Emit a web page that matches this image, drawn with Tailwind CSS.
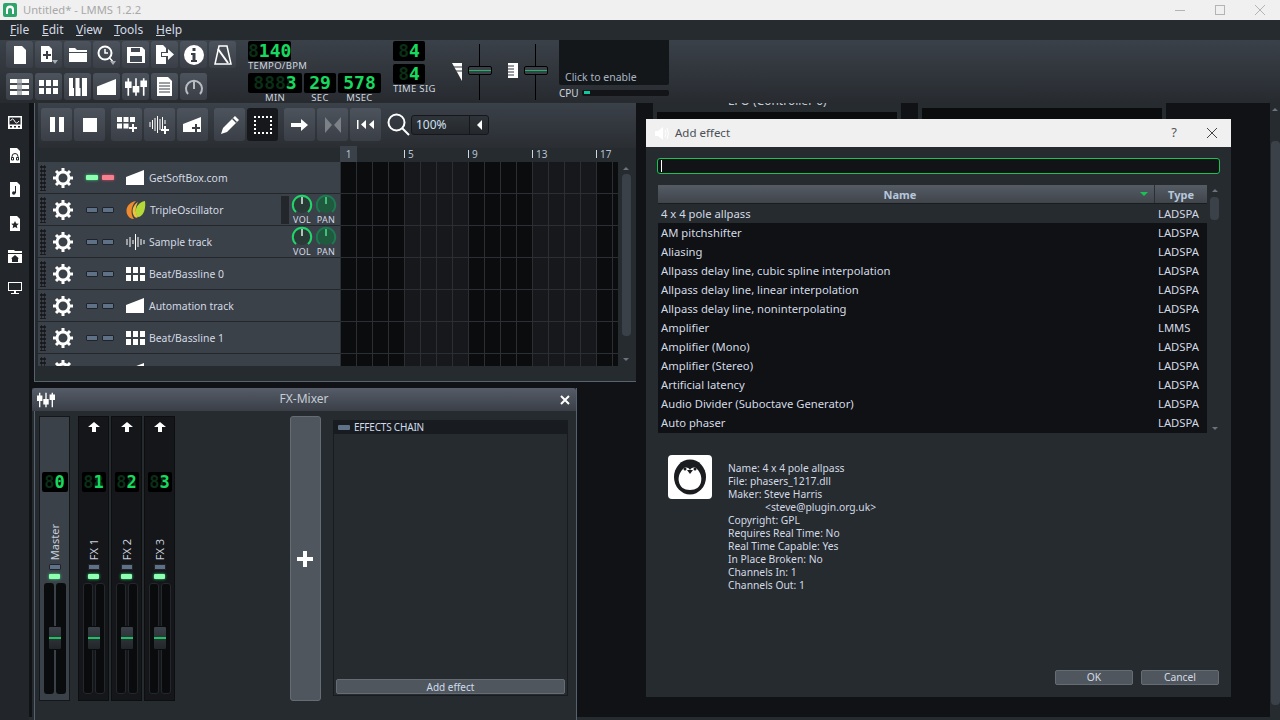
<!DOCTYPE html>
<html lang="en">
<head>
  <meta charset="UTF-8">
  <title>Untitled* - LMMS 1.2.2</title>
  <script src="https://cdn.jsdelivr.net/npm/@tailwindcss/browser@4"></script>
</head>
<body class="w-[1280px] h-[720px] overflow-hidden bg-[#101215] text-[#d3dae4] [font-family:'Noto_Sans',sans-serif] text-[10.400px]">

  <!-- shared icons -->
  <svg class="hidden">
    <symbol id="gear" viewBox="0 0 20 20"><circle cx="10" cy="10" r="6" fill="none" stroke="#fff" stroke-width="3"/><g stroke="#fff" stroke-width="3"><path d="M10 0v4M10 16v4M0 10h4M16 10h4M3 3l3 3M14 14l3 3M17 3l-3 3M6 14l-3 3"/></g></symbol>
    <symbol id="wedge" viewBox="0 0 18 15"><path d="M0 15V7L18 0v15z" fill="#fff"/></symbol>
    <symbol id="beat" viewBox="0 0 19 14"><path d="M0 0h5v6H0zM7 0h5v6H7zM14 0h5v6h-5zM0 8h5v6H0zM7 8h5v6H7zM14 8h5v6h-5z" fill="#fff"/></symbol>
    <symbol id="wave" viewBox="0 0 19 16"><path d="M1 5v6M4 3v10M7 6v4M9.500 0v16M12 3v10M15 5v6M18 6v4" stroke="#fff" stroke-width="1" fill="none"/></symbol>
    <symbol id="mixer" viewBox="0 0 20 16"><g stroke="#fff" stroke-width="1.500"><path d="M3 0v16M10 0v16M17 0v16"/></g><path d="M0 3h6v6H0zM7 7h6v6H7zM14 2h6v6h-6z" fill="#fff"/></symbol>
    <symbol id="knob-vol" viewBox="0 0 22 22"><circle cx="11" cy="11" r="8" fill="#2a3a37"/><path d="M5 18A9.200 9.200 0 1 1 17 18" fill="none" stroke="#1fd66a" stroke-width="2"/><path d="M11 3v7" stroke="#d9f5e3" stroke-width="1.500"/></symbol>
    <symbol id="knob-pan" viewBox="0 0 22 22"><circle cx="11" cy="11" r="8" fill="#1f5a3e"/><path d="M5 18A9.200 9.200 0 1 1 17 18" fill="none" stroke="#1c7a50" stroke-width="2"/><path d="M11 3v7" stroke="#4fe08e" stroke-width="1.500"/></symbol>
    <symbol id="send" viewBox="0 0 12 10"><path d="M6 0l6 5H8v5H4V5H0z" fill="#fff"/></symbol>
  </svg>

  <!-- window title -->
  <div class="h-5 bg-[#f0f0f0] flex items-center pl-[3px] gap-[6px] text-[11.200px] text-[#a8a8a8]">
    <svg class="w-[14px] h-[14px]" viewBox="0 0 14 14"><rect width="14" height="14" rx="2" fill="#2ea36a"/><path d="M3 11V6.500a4 4 0 0 1 8 0V11H9V7a2 2 0 0 0-4 0v4z" fill="#fff"/></svg>
    <span>Untitled* - LMMS 1.2.2</span>
    <div class="ml-auto flex items-center gap-[30px] pr-[15px]">
      <div class="w-[10px] h-px bg-[#b4b4b4]"></div>
      <div class="w-[10px] h-[10px] border border-[#b4b4b4]"></div>
      <svg class="w-[10px] h-[10px]" viewBox="0 0 10 10"><path d="M0 0l10 10M10 0L0 10" stroke="#b4b4b4"/></svg>
    </div>
  </div>

  <!-- menu -->
  <div class="h-5 bg-[#262b30] flex items-center text-[12px] text-[#d3dae4] pl-[10px]">
    <span class="w-[32px]"><u>F</u>ile</span>
    <span class="w-[34px]"><u>E</u>dit</span>
    <span class="w-[38px]"><u>V</u>iew</span>
    <span class="w-[42px]"><u>T</u>ools</span>
    <span><u>H</u>elp</span>
  </div>

  <!-- main toolbar -->
  <div class="h-[63px] bg-gradient-to-b from-[#3b4149] to-[#272b30] flex">
    <div class="w-[248px] shrink-0 pl-[6px] pt-px flex flex-col gap-[5px]">
      <div class="flex gap-[2px]">
        <div class="w-[27px] h-[27px] rounded-[3px] bg-gradient-to-b from-[#4d535c] to-[#3a3f47] flex items-center justify-center"><svg class="w-[18px] h-[18px]" viewBox="0 0 18 18"><path d="M3 0h8l4 4v14H3z" fill="#fff"/></svg></div>
        <div class="w-[27px] h-[27px] rounded-[3px] bg-gradient-to-b from-[#4d535c] to-[#3a3f47] flex items-center justify-center"><svg class="w-[20px] h-[20px]" viewBox="0 0 20 20"><path d="M2 1h8l3 3v13H2z" fill="#fff"/><path d="M7 6v3H4v2h3v3h2v-3h3V9H9V6z" fill="#3a3f47"/><path d="M13 15h6l-3 4z" fill="#a8adb3"/></svg></div>
        <div class="w-[27px] h-[27px] rounded-[3px] bg-gradient-to-b from-[#4d535c] to-[#3a3f47] flex items-center justify-center"><svg class="w-[18px] h-[16px]" viewBox="0 0 18 16"><path d="M0 1h6l2 2h10v2H0zM0 6h18v9H0z" fill="#fff"/></svg></div>
        <div class="w-[27px] h-[27px] rounded-[3px] bg-gradient-to-b from-[#4d535c] to-[#3a3f47] flex items-center justify-center"><svg class="w-[21px] h-[21px]" viewBox="0 0 21 21"><circle cx="9" cy="9" r="6.500" fill="none" stroke="#fff" stroke-width="2"/><path d="M9 5v4h3M13.500 14l3 3" fill="none" stroke="#fff" stroke-width="1.500"/><path d="M14 17h6l-3 4z" fill="#a8adb3"/></svg></div>
        <div class="w-[27px] h-[27px] rounded-[3px] bg-gradient-to-b from-[#4d535c] to-[#3a3f47] flex items-center justify-center"><svg class="w-[18px] h-[18px]" viewBox="0 0 18 18"><path d="M0 1h15l3 3v13H0z" fill="#fff"/><path d="M4 2h9v4H4zM3 10h12v6H3z" fill="#444a52"/></svg></div>
        <div class="w-[27px] h-[27px] rounded-[3px] bg-gradient-to-b from-[#4d535c] to-[#3a3f47] flex items-center justify-center"><svg class="w-[20px] h-[19px]" viewBox="0 0 20 19"><path d="M1 0h7l3 3v4H6v5h5v7H1z" fill="#fff"/><path d="M7 8h6V4l6 5.500-6 5.500v-4H7z" fill="#fff"/></svg></div>
        <div class="w-[27px] h-[27px] rounded-[3px] bg-gradient-to-b from-[#4d535c] to-[#3a3f47] flex items-center justify-center"><svg class="w-[20px] h-[20px]" viewBox="0 0 20 20"><circle cx="10" cy="10" r="10" fill="#fff"/><path d="M8.500 3h3v3h-3zM7 8h4.500v7H13v2H7v-2h1.500v-5H7z" fill="#3a3f47"/></svg></div>
        <div class="w-[27px] h-[27px] rounded-[3px] bg-gradient-to-b from-[#4d535c] to-[#3a3f47] flex items-center justify-center"><svg class="w-[20px] h-[20px]" viewBox="0 0 20 20"><path d="M6 1h8l4 18H2z" fill="none" stroke="#fff" stroke-width="1.500"/><path d="M5 4l10 14" stroke="#fff" stroke-width="2"/></svg></div>
      </div>
      <div class="flex gap-[2px]">
        <div class="w-[27px] h-[27px] rounded-[3px] bg-gradient-to-b from-[#4d535c] to-[#3a3f47] flex items-center justify-center"><svg class="w-[19px] h-[16px]" viewBox="0 0 19 16"><path d="M0 0h19v4H0zM0 6h19v4H0zM0 12h19v4H0z" fill="#fff"/><path d="M7 0h5v16H7z" fill="#8f949a" opacity=".7"/></svg></div>
        <div class="w-[27px] h-[27px] rounded-[3px] bg-gradient-to-b from-[#4d535c] to-[#3a3f47] flex items-center justify-center"><svg class="w-[19px] h-[14px]"><use href="#beat"/></svg></div>
        <div class="w-[27px] h-[27px] rounded-[3px] bg-gradient-to-b from-[#4d535c] to-[#3a3f47] flex items-center justify-center"><svg class="w-[18px] h-[18px]" viewBox="0 0 18 18"><path d="M0 0h5v18H0zM6.500 0h5v18h-5zM13 0h5v18h-5z" fill="#fff"/><path d="M4 0h1.500v10H4zM10.500 0H12v10h-1.500z" fill="#3a3f47"/></svg></div>
        <div class="w-[27px] h-[27px] rounded-[3px] bg-gradient-to-b from-[#4d535c] to-[#3a3f47] flex items-center justify-center"><svg class="w-[19px] h-[16px]"><use href="#wedge"/></svg></div>
        <div class="w-[27px] h-[27px] rounded-[3px] bg-gradient-to-b from-[#4d535c] to-[#3a3f47] flex items-center justify-center"><svg class="w-[22px] h-[18px]"><use href="#mixer"/></svg></div>
        <div class="w-[27px] h-[27px] rounded-[3px] bg-gradient-to-b from-[#4d535c] to-[#3a3f47] flex items-center justify-center"><svg class="w-[17px] h-[19px]" viewBox="0 0 17 19"><path d="M1 0h11l4 4v15H1z" fill="#fff"/><path d="M3 6h11M3 9h11M3 12h11M3 15h11" stroke="#3a3f47"/></svg></div>
        <div class="w-[27px] h-[27px] rounded-[3px] bg-gradient-to-b from-[#4d535c] to-[#3a3f47] flex items-center justify-center"><svg class="w-[20px] h-[20px]" viewBox="0 0 20 20"><path d="M4 17A8 8 0 1 1 16 17" fill="none" stroke="#b9bdc2" stroke-width="2"/><path d="M10 4v8" stroke="#b9bdc2" stroke-width="2"/></svg></div>
      </div>
    </div>

    <!-- lcd group -->
    <div class="w-[145px] shrink-0 pt-px">
      <div class="w-[43px] h-[20px] bg-black rounded-[2px] grid place-items-center font-['DejaVu_Sans_Mono'] font-bold text-[18px] leading-none">
        <span class="[grid-area:1/1] text-[#0b2e16]">8140</span>
        <span class="[grid-area:1/1] text-[#18d860] whitespace-pre"> 140</span>
      </div>
      <div class="mt-[-1px] text-[9.500px] leading-[12px] tracking-[0.3px] text-[#cfd6df]">TEMPO/BPM</div>
      <div class="flex mt-[1px] gap-[2px]">
        <div class="flex flex-col items-center">
          <div class="w-[54px] h-[20px] bg-black rounded-[2px] grid place-items-center font-['DejaVu_Sans_Mono'] font-bold text-[18px] leading-none">
            <span class="[grid-area:1/1] text-[#0b2e16]">8888</span>
            <span class="[grid-area:1/1] text-[#18d860] whitespace-pre">   3</span>
          </div>
          <div class="-mt-px text-[9.500px] leading-[12px] tracking-[0.3px] text-[#cfd6df]">MIN</div>
        </div>
        <div class="flex flex-col items-center">
          <div class="w-[32px] h-[20px] bg-black rounded-[2px] grid place-items-center font-['DejaVu_Sans_Mono'] font-bold text-[18px] leading-none text-[#18d860]">29</div>
          <div class="-mt-px text-[9.500px] leading-[12px] tracking-[0.3px] text-[#cfd6df]">SEC</div>
        </div>
        <div class="flex flex-col items-center">
          <div class="w-[43px] h-[20px] bg-black rounded-[2px] grid place-items-center font-['DejaVu_Sans_Mono'] font-bold text-[18px] leading-none text-[#18d860]">578</div>
          <div class="-mt-px text-[9.500px] leading-[12px] tracking-[0.3px] text-[#cfd6df]">MSEC</div>
        </div>
      </div>
    </div>

    <!-- time signature -->
    <div class="w-[59px] shrink-0 pt-px flex flex-col gap-[3px]">
      <div class="w-[32px] h-[20px] bg-black rounded-[2px] grid place-items-center font-['DejaVu_Sans_Mono'] font-bold text-[18px] leading-none">
        <span class="[grid-area:1/1] text-[#0b2e16]">84</span><span class="[grid-area:1/1] text-[#18d860] whitespace-pre"> 4</span>
      </div>
      <div class="w-[32px] h-[20px] bg-black rounded-[2px] grid place-items-center font-['DejaVu_Sans_Mono'] font-bold text-[18px] leading-none">
        <span class="[grid-area:1/1] text-[#0b2e16]">84</span><span class="[grid-area:1/1] text-[#18d860] whitespace-pre"> 4</span>
      </div>
      <div class="-mt-[3px] text-[9.500px] leading-[10px] tracking-[0.3px] text-[#cfd6df] whitespace-nowrap">TIME SIG</div>
    </div>

    <!-- master sliders -->
    <div class="w-[107px] shrink-0 relative">
      <svg class="absolute left-0 top-[23px] w-[10px] h-[18px]" viewBox="0 0 10 18"><path d="M0 0h10v18z" fill="#fff"/><path d="M0 4h10M0 8h10" stroke="#353a41"/></svg>
      <div class="absolute left-[27px] top-[4px] w-px h-[56px] bg-black"></div>
      <div class="absolute left-[16px] top-[26px] w-[24px] h-[9px] rounded-[2px] border border-black bg-[#3b4149] flex items-center"><div class="w-full h-px bg-[#1fb765]"></div></div>
      <svg class="absolute left-[56px] top-[23px] w-[10px] h-[15px]" viewBox="0 0 10 15"><path d="M0 0h10v15H0z" fill="#fff"/><path d="M0 3h6M0 6h6M0 9h6M0 12h6" stroke="#32373d"/></svg>
      <div class="absolute left-[83px] top-[4px] w-px h-[56px] bg-black"></div>
      <div class="absolute left-[72px] top-[26px] w-[24px] h-[9px] rounded-[2px] border border-black bg-[#3b4149] flex items-center"><div class="w-full h-px bg-[#1fb765]"></div></div>
    </div>

    <!-- cpu graph -->
    <div class="w-[110px] shrink-0">
      <div class="h-[45px] bg-[#14171a] rounded-b-[2px] pl-[6px] pt-[30px] text-[10.500px] leading-[14px] text-[#aab5c4]">Click to enable</div>
      <div class="flex items-center mt-[2px] text-[10px] leading-[12px] text-[#cfd6df]">CPU
        <div class="ml-[3px] w-[87px] h-[6px] rounded-[2px] bg-[#121417] pl-[2px] pt-[1px]"><div class="w-[6px] h-[3px] bg-[#10c8a0]"></div></div>
      </div>
    </div>
  </div>

  <div class="flex h-[617px]">
    <!-- side bar -->
    <div class="w-[29px] shrink-0 bg-[#22262a] flex flex-col items-center pt-[13px] gap-[19px]">
      <svg class="w-[14px] h-[13px]" viewBox="0 0 14 13"><path d="M0 0h14v13H0z" fill="#fff"/><path d="M1.500 1.500h11v7h-11zM2 10h2v1.500H2zM6 10h2v1.500H6zM10 10h2v1.500h-2z" fill="#22262a"/><path d="M2.500 5q2-4 4 0t4.500 0" fill="none" stroke="#fff"/></svg>
      <svg class="w-[10px] h-[15px]" viewBox="0 0 10 15"><path d="M0 0h7l3 3v12H0z" fill="#fff"/><path d="M2 10V8.500a3 3 0 0 1 6 0V10M1.500 9.500h2V12h-2zM6.500 9.500h2V12h-2z" fill="none" stroke="#22262a"/></svg>
      <svg class="w-[10px] h-[15px]" viewBox="0 0 10 15"><path d="M0 0h7l3 3v12H0z" fill="#fff"/><path d="M5.500 4v7" stroke="#22262a"/><circle cx="3.800" cy="11" r="1.800" fill="#22262a"/></svg>
      <svg class="w-[10px] h-[15px]" viewBox="0 0 10 15"><path d="M0 0h7l3 3v12H0z" fill="#fff"/><path d="M5 5l1.200 2.500 2.600.3-2 1.800.6 2.700L5 11l-2.400 1.300.6-2.700-2-1.800 2.600-.3z" fill="#22262a"/></svg>
      <svg class="w-[14px] h-[13px]" viewBox="0 0 14 13"><path d="M0 0h6l1 1h7v2H0zM0 4h14v9H0z" fill="#fff"/><path d="M7 5l4 3.500h-1V12H4V8.500H3z" fill="#22262a"/></svg>
      <svg class="w-[14px] h-[12px]" viewBox="0 0 14 12"><path d="M0 0h14v9H0zM6 9h2v2h3v1H3v-1h3z" fill="#fff"/><path d="M1 1h12v7H1z" fill="#22262a"/></svg>
    </div>

    <!-- workspace -->
    <div class="relative flex-1 bg-[#101215] overflow-hidden">

      <!-- background windows -->
      <div class="absolute left-[624px] top-0 w-[248px] h-[100px] bg-[#262b30] px-[4px] pt-[9px] overflow-hidden">
        <div class="absolute left-[75px] top-[-11px] text-[12px] leading-[18px] text-[#c5ccd6] whitespace-nowrap">LFO (Controller 0)</div>
        <div class="h-full bg-[#0b0c0e]"></div>
      </div>
      <div class="absolute left-[889px] top-0 w-[248px] h-[100px] bg-[#262b30] px-[4px] pt-[5px]"><div class="h-full bg-[#0b0c0e]"></div></div>

      <!-- right scroll bar -->
      <div class="absolute right-0 top-0 w-[10px] h-[614px] bg-[#262b30] flex flex-col items-center pt-[5px]">
        <div class="w-0 h-0 border-x-[3px] border-x-transparent border-b-[3px] border-b-[#6c737c]"></div>
        <div class="mt-[30px] w-[9px] h-[564px] rounded-[4px] bg-[#3b4149]"></div>
      </div>
      <div class="absolute left-0 right-0 bottom-0 h-[3px] bg-[#262b30]"></div>

      <!-- song editor -->
      <div class="absolute left-[5px] top-0 w-[602px] h-[279px] bg-[#262b30] border-l border-b border-[#56626e] flex flex-col">
        <div class="h-[45px] shrink-0 ml-[3px] bg-gradient-to-b from-[#3b4149] to-[#2a2e33] flex items-center pl-[3px] pb-[2px]">
          <div class="flex gap-[2px]">
            <div class="w-[31px] h-[33px] rounded-[3px] bg-gradient-to-b from-[#4d535c] to-[#3a3f47] flex items-center justify-center"><svg class="w-[14px] h-[15px]" viewBox="0 0 14 15"><path d="M0 0h5v15H0zM9 0h5v15H9z" fill="#fff"/></svg></div>
            <div class="w-[31px] h-[33px] rounded-[3px] bg-gradient-to-b from-[#4d535c] to-[#3a3f47] flex items-center justify-center"><div class="w-[14px] h-[14px] bg-white"></div></div>
          </div>
          <div class="flex gap-[2px] ml-[6px]">
            <div class="w-[31px] h-[33px] rounded-[3px] bg-gradient-to-b from-[#4d535c] to-[#3a3f47] flex items-center justify-center"><svg class="w-[20px] h-[15px]" viewBox="0 0 20 15"><path d="M0 0h5v5H0zM6.500 0h5v5h-5zM13 0h5v5h-5zM0 6.500h5v5H0zM6.500 6.500h5v5h-5z" fill="#fff"/><path d="M15 7v3h-3v2h3v3h2v-3h3v-2h-3V7z" fill="#fff"/></svg></div>
            <div class="w-[31px] h-[33px] rounded-[3px] bg-gradient-to-b from-[#4d535c] to-[#3a3f47] flex items-center justify-center"><svg class="w-[21px] h-[18px]" viewBox="0 0 21 18"><path d="M1 6v5M3.500 4v9M6 2v13M8.500 0v17M11 3v11M13.500 1v12M16 4v4" stroke="#fff" fill="none"/><path d="M15 10v3h-3v2h3v3h2v-3h3v-2h-3v-3z" fill="#fff"/></svg></div>
            <div class="w-[31px] h-[33px] rounded-[3px] bg-gradient-to-b from-[#4d535c] to-[#3a3f47] flex items-center justify-center"><svg class="w-[19px] h-[15px]" viewBox="0 0 19 15"><path d="M0 15V7L18 0v15z" fill="#fff"/><path d="M12 7v3H9v2h3v3h2v-3h3v-2h-3V7z" fill="#3a3f47"/></svg></div>
          </div>
          <div class="flex gap-[2px] ml-[6px]">
            <div class="w-[31px] h-[33px] rounded-[3px] bg-gradient-to-b from-[#4d535c] to-[#3a3f47] flex items-center justify-center"><svg class="w-[20px] h-[20px]" viewBox="0 0 20 20"><path d="M15 1l4 4L7 17l-6 2 2-6z" fill="#fff"/><path d="M12.500 3.500l4 4" stroke="#3f454d" stroke-width="1.500"/></svg></div>
            <div class="w-[31px] h-[33px] rounded-[3px] bg-[#16181c] flex items-center justify-center"><div class="w-[18px] h-[18px] border-[2px] border-dotted border-white"></div></div>
          </div>
          <div class="flex gap-[2px] ml-[6px]">
            <div class="w-[31px] h-[33px] rounded-[3px] bg-gradient-to-b from-[#4d535c] to-[#3a3f47] flex items-center justify-center"><svg class="w-[17px] h-[12px]" viewBox="0 0 17 12"><path d="M0 4h10V0l7 6-7 6V8H0z" fill="#fff"/></svg></div>
            <div class="w-[31px] h-[33px] rounded-[3px] bg-gradient-to-b from-[#4d535c] to-[#3a3f47] flex items-center justify-center"><svg class="w-[16px] h-[16px]" viewBox="0 0 16 16"><path d="M0 0l7 8-7 8zM16 0L9 8l7 8z" fill="#7c8187"/></svg></div>
            <div class="w-[31px] h-[33px] rounded-[3px] bg-gradient-to-b from-[#4d535c] to-[#3a3f47] flex items-center justify-center"><svg class="w-[17px] h-[9px]" viewBox="0 0 17 9"><path d="M0 0h1.500v9H0zM9 0v9L4 4.500zM17 0v9l-5-4.500z" fill="#fff"/></svg></div>
          </div>
          <svg class="ml-[6px] w-[23px] h-[23px]" viewBox="0 0 23 23"><circle cx="9.500" cy="9.500" r="8" fill="none" stroke="#fff" stroke-width="2"/><path d="M15 15l7 7" stroke="#fff" stroke-width="2"/></svg>
          <div class="ml-px w-[78px] h-[20px] rounded-[3px] border border-[#15171a] bg-gradient-to-b from-[#2f343a] to-[#24282c] flex items-center pl-[4px] text-[12px] text-[#cfe0f2]">100%
            <div class="ml-auto w-[19px] h-full border-l border-[#15171a] flex items-center justify-center"><div class="w-0 h-0 border-y-[5px] border-y-transparent border-r-[5px] border-r-white"></div></div>
          </div>
        </div>

        <div class="ml-[3px] flex flex-1 min-h-0">
          <div class="w-[302px] shrink-0 flex flex-col">
            <div class="h-[14px] shrink-0"></div>
            <div class="h-[204px] overflow-hidden flex flex-col">

              <div class="h-[32px] shrink-0 bg-[#3b4149] border-b border-[#23272b] flex items-center relative">
                <div class="ml-[2px] w-[6px] h-[26px] bg-[radial-gradient(#16181b_1px,transparent_1.500px)] bg-[length:3px_4px]"></div>
                <svg class="ml-[7px] w-[20px] h-[20px]"><use href="#gear"/></svg>
                <div class="ml-[13px] w-[12px] h-[5px] rounded-[1px] bg-[#8dffb0] shadow-[0_0_3px_#35e07a]"></div>
                <div class="ml-[4px] w-[12px] h-[5px] rounded-[1px] bg-[#f5808f] shadow-[0_0_3px_#e04a5e]"></div>
                <svg class="ml-[12px] w-[18px] h-[15px]"><use href="#wedge"/></svg>
                <span class="ml-[5px] pt-[2px]">GetSoftBox.com</span>
              </div>

              <div class="h-[32px] shrink-0 bg-[#3b4149] border-b border-[#23272b] flex items-center relative">
                <div class="ml-[2px] w-[6px] h-[26px] bg-[radial-gradient(#16181b_1px,transparent_1.500px)] bg-[length:3px_4px]"></div>
                <svg class="ml-[7px] w-[20px] h-[20px]"><use href="#gear"/></svg>
                <div class="ml-[13px] w-[12px] h-[6px] rounded-[1px] border border-[#20242a] bg-[#5e7187]"></div>
                <div class="ml-[4px] w-[12px] h-[6px] rounded-[1px] border border-[#20242a] bg-[#5e7187]"></div>
                <svg class="ml-[12px] w-[20px] h-[20px]" viewBox="0 0 20 20"><path d="M10 1C3 2-1 8 1 14c1 3 4 5 7 5C4 14 5 6 10 1z" fill="#ef8a2e"/><path d="M12 2C7 5 5 11 8 16c1 2 3 2 4 1-3-4-3-10 0-15z" fill="#f0c23c"/><path d="M19 1c-6 1-10 6-9 12 0 2 1 4 3 4 5-2 7-9 6-16z" fill="#b5d936"/></svg>
                <span class="ml-[4px] pt-[2px]">TripleOscillator</span>
                <div class="absolute left-[243px] top-[2px] w-[8px] h-[28px] bg-[#23272b]"></div>
                <div class="absolute left-[252px] top-0 w-[24px] flex flex-col items-center">
                  <svg class="w-[22px] h-[22px]"><use href="#knob-vol"/></svg>
                  <span class="-mt-px text-[9px] leading-[9px] tracking-[0.3px]">VOL</span>
                </div>
                <div class="absolute left-[276px] top-0 w-[24px] flex flex-col items-center">
                  <svg class="w-[22px] h-[22px]"><use href="#knob-pan"/></svg>
                  <span class="-mt-px text-[9px] leading-[9px] tracking-[0.3px]">PAN</span>
                </div>
              </div>

              <div class="h-[32px] shrink-0 bg-[#3b4149] border-b border-[#23272b] flex items-center relative">
                <div class="ml-[2px] w-[6px] h-[26px] bg-[radial-gradient(#16181b_1px,transparent_1.500px)] bg-[length:3px_4px]"></div>
                <svg class="ml-[7px] w-[20px] h-[20px]"><use href="#gear"/></svg>
                <div class="ml-[13px] w-[12px] h-[6px] rounded-[1px] border border-[#20242a] bg-[#5e7187]"></div>
                <div class="ml-[4px] w-[12px] h-[6px] rounded-[1px] border border-[#20242a] bg-[#5e7187]"></div>
                <svg class="ml-[12px] w-[19px] h-[16px]"><use href="#wave"/></svg>
                <span class="ml-[4px] pt-[2px]">Sample track</span>
                <div class="absolute left-[252px] top-0 w-[24px] flex flex-col items-center">
                  <svg class="w-[22px] h-[22px]"><use href="#knob-vol"/></svg>
                  <span class="-mt-px text-[9px] leading-[9px] tracking-[0.3px]">VOL</span>
                </div>
                <div class="absolute left-[276px] top-0 w-[24px] flex flex-col items-center">
                  <svg class="w-[22px] h-[22px]"><use href="#knob-pan"/></svg>
                  <span class="-mt-px text-[9px] leading-[9px] tracking-[0.3px]">PAN</span>
                </div>
              </div>

              <div class="h-[32px] shrink-0 bg-[#3b4149] border-b border-[#23272b] flex items-center">
                <div class="ml-[2px] w-[6px] h-[26px] bg-[radial-gradient(#16181b_1px,transparent_1.500px)] bg-[length:3px_4px]"></div>
                <svg class="ml-[7px] w-[20px] h-[20px]"><use href="#gear"/></svg>
                <div class="ml-[13px] w-[12px] h-[6px] rounded-[1px] border border-[#20242a] bg-[#5e7187]"></div>
                <div class="ml-[4px] w-[12px] h-[6px] rounded-[1px] border border-[#20242a] bg-[#5e7187]"></div>
                <svg class="ml-[12px] w-[19px] h-[14px]"><use href="#beat"/></svg>
                <span class="ml-[4px] pt-[2px]">Beat/Bassline 0</span>
              </div>

              <div class="h-[32px] shrink-0 bg-[#3b4149] border-b border-[#23272b] flex items-center">
                <div class="ml-[2px] w-[6px] h-[26px] bg-[radial-gradient(#16181b_1px,transparent_1.500px)] bg-[length:3px_4px]"></div>
                <svg class="ml-[7px] w-[20px] h-[20px]"><use href="#gear"/></svg>
                <div class="ml-[13px] w-[12px] h-[6px] rounded-[1px] border border-[#20242a] bg-[#5e7187]"></div>
                <div class="ml-[4px] w-[12px] h-[6px] rounded-[1px] border border-[#20242a] bg-[#5e7187]"></div>
                <svg class="ml-[12px] w-[18px] h-[15px]"><use href="#wedge"/></svg>
                <span class="ml-[5px] pt-[2px]">Automation track</span>
              </div>

              <div class="h-[32px] shrink-0 bg-[#3b4149] border-b border-[#23272b] flex items-center">
                <div class="ml-[2px] w-[6px] h-[26px] bg-[radial-gradient(#16181b_1px,transparent_1.500px)] bg-[length:3px_4px]"></div>
                <svg class="ml-[7px] w-[20px] h-[20px]"><use href="#gear"/></svg>
                <div class="ml-[13px] w-[12px] h-[6px] rounded-[1px] border border-[#20242a] bg-[#5e7187]"></div>
                <div class="ml-[4px] w-[12px] h-[6px] rounded-[1px] border border-[#20242a] bg-[#5e7187]"></div>
                <svg class="ml-[12px] w-[19px] h-[14px]"><use href="#beat"/></svg>
                <span class="ml-[4px] pt-[2px]">Beat/Bassline 1</span>
              </div>

              <div class="h-[32px] shrink-0 bg-[#3b4149] flex items-center">
                <div class="ml-[2px] w-[6px] h-[26px] bg-[radial-gradient(#16181b_1px,transparent_1.500px)] bg-[length:3px_4px]"></div>
                <svg class="ml-[7px] w-[20px] h-[20px]"><use href="#gear"/></svg>
                <div class="ml-[13px] w-[12px] h-[6px] rounded-[1px] border border-[#20242a] bg-[#5e7187]"></div>
                <div class="ml-[4px] w-[12px] h-[6px] rounded-[1px] border border-[#20242a] bg-[#5e7187]"></div>
                <svg class="ml-[12px] w-[18px] h-[15px]"><use href="#wedge"/></svg>
                <span class="ml-[5px] pt-[2px]">Automation track</span>
              </div>
            </div>
          </div>

          <div class="w-[278px] shrink-0 flex flex-col">
            <div class="-mt-[2px] h-[16px] shrink-0 flex items-center text-[10px] text-[#b6c2d0]">
              <div class="w-[17px] h-[16px] bg-[#3b4149] text-center leading-[16px] mr-[47px]">1</div>
              <div class="w-[64px] flex items-center gap-[3px]"><div class="w-px h-[8px] bg-[#cfd6df]"></div>5</div>
              <div class="w-[64px] flex items-center gap-[3px]"><div class="w-px h-[8px] bg-[#cfd6df]"></div>9</div>
              <div class="w-[64px] flex items-center gap-[3px]"><div class="w-px h-[8px] bg-[#cfd6df]"></div>13</div>
              <div class="flex items-center gap-[3px]"><div class="w-px h-[8px] bg-[#cfd6df]"></div>17</div>
            </div>
            <div class="h-[204px] [background:linear-gradient(#2b2e32_1px,transparent_1px)_0_31px/100%_32px,linear-gradient(90deg,#2b2e32_1px,transparent_1px)_0_0/16px_100%,linear-gradient(90deg,#0b0c0e_64px,#16181c_64px)_0_0/128px_100%]"></div>
          </div>

          <div class="w-[16px] flex flex-col items-center pt-[19px]">
            <div class="w-0 h-0 border-x-[3px] border-x-transparent border-b-[3px] border-b-[#6c737c]"></div>
            <div class="mt-[4px] w-[9px] h-[162px] rounded-[4px] bg-[#3b4149]"></div>
            <div class="mt-[22px] w-0 h-0 border-x-[3px] border-x-transparent border-t-[3px] border-t-[#6c737c]"></div>
          </div>
        </div>
      </div>

      <!-- fx mixer -->
      <div class="absolute left-[3px] top-[285px] w-[545px] h-[332px] bg-[#262b30] border-r border-[#56626e] flex flex-col">
        <div class="h-[23px] shrink-0 bg-gradient-to-b from-[#565c68] to-[#3a3f47] rounded-t-[3px] flex items-center px-[5px] relative">
          <svg class="w-[18px] h-[16px]"><use href="#mixer"/></svg>
          <span class="absolute left-0 right-0 top-[2px] text-center text-[12px] leading-[18px] text-[#c5ccd6]">FX-Mixer</span>
          <svg class="ml-auto mr-[1px] w-[10px] h-[10px]" viewBox="0 0 10 10"><path d="M1 1l8 8M9 1L1 9" stroke="#fff" stroke-width="2"/></svg>
        </div>
        <div class="flex flex-1 border-l border-[#56626e] ml-[2px] pl-[4px] pt-[5px]">

          <!-- master -->
          <div class="w-[31px] h-[285px] shrink-0 bg-[#3b4149] border border-[#14161a] flex flex-col items-center">
            <div class="mt-[55px] w-[26px] h-[20px] rounded-[2px] bg-black grid place-items-center font-['DejaVu_Sans_Mono'] font-bold text-[17px] leading-none">
              <span class="[grid-area:1/1] text-[#0b2e16]">88</span><span class="[grid-area:1/1] text-[#18d860] whitespace-pre"> 0</span>
            </div>
            <div class="flex-1 flex items-end text-[11px] text-[#c8d0da]"><span class="[writing-mode:vertical-rl] rotate-180 leading-[12px]">Master</span></div>
            <div class="mt-[4px] w-[12px] h-[6px] rounded-[1px] border border-[#20242a] bg-[#5e7187]"></div>
            <div class="mt-[4px] w-[11px] h-[5px] rounded-[1px] bg-[#8dffb0] shadow-[0_0_3px_#35e07a]"></div>
            <div class="relative mt-[4px] mb-[6px] flex gap-[2px] h-[111px]">
              <div class="w-[10px] rounded-[3px] bg-[#0a0b0d]"></div>
              <div class="w-[10px] rounded-[3px] bg-[#0a0b0d]"></div>
              <div class="absolute left-[4px] top-[43px] w-[14px] h-[24px] rounded-[2px] border border-[#0a0b0d] bg-gradient-to-b from-[#3b4149] to-[#22262a] flex items-center"><div class="w-full h-[2px] bg-[#1bc25f]"></div></div>
            </div>
          </div>

          <!-- channels -->
          <div class="ml-[8px] flex gap-[2px]">
            <div class="w-[31px] h-[285px] bg-[#14161a] border border-[#0d0e10] flex flex-col items-center">
              <svg class="mt-[5px] w-[12px] h-[10px]"><use href="#send"/></svg>
              <div class="mt-[40px] w-[24px] h-[20px] rounded-[2px] bg-black grid place-items-center font-['DejaVu_Sans_Mono'] font-bold text-[17px] leading-none">
                <span class="[grid-area:1/1] text-[#0b2e16]">88</span><span class="[grid-area:1/1] text-[#18d860] whitespace-pre"> 1</span>
              </div>
              <div class="flex-1 flex items-end text-[11px] text-[#c8d0da]"><span class="[writing-mode:vertical-rl] rotate-180 leading-[12px]">FX 1</span></div>
              <div class="mt-[4px] w-[12px] h-[6px] rounded-[1px] border border-[#20242a] bg-[#5e7187]"></div>
              <div class="mt-[4px] w-[11px] h-[5px] rounded-[1px] bg-[#8dffb0] shadow-[0_0_3px_#35e07a]"></div>
              <div class="relative mt-[4px] mb-[6px] flex gap-[2px] h-[111px]">
                <div class="w-[10px] rounded-[3px] bg-[#0a0b0d] border border-[#24272b]"></div>
                <div class="w-[10px] rounded-[3px] bg-[#0a0b0d] border border-[#24272b]"></div>
                <div class="absolute left-[4px] top-[43px] w-[14px] h-[24px] rounded-[2px] border border-[#0a0b0d] bg-gradient-to-b from-[#3b4149] to-[#22262a] flex items-center"><div class="w-full h-[2px] bg-[#1bc25f]"></div></div>
              </div>
            </div>
            <div class="w-[31px] h-[285px] bg-[#14161a] border border-[#0d0e10] flex flex-col items-center">
              <svg class="mt-[5px] w-[12px] h-[10px]"><use href="#send"/></svg>
              <div class="mt-[40px] w-[24px] h-[20px] rounded-[2px] bg-black grid place-items-center font-['DejaVu_Sans_Mono'] font-bold text-[17px] leading-none">
                <span class="[grid-area:1/1] text-[#0b2e16]">88</span><span class="[grid-area:1/1] text-[#18d860] whitespace-pre"> 2</span>
              </div>
              <div class="flex-1 flex items-end text-[11px] text-[#c8d0da]"><span class="[writing-mode:vertical-rl] rotate-180 leading-[12px]">FX 2</span></div>
              <div class="mt-[4px] w-[12px] h-[6px] rounded-[1px] border border-[#20242a] bg-[#5e7187]"></div>
              <div class="mt-[4px] w-[11px] h-[5px] rounded-[1px] bg-[#8dffb0] shadow-[0_0_3px_#35e07a]"></div>
              <div class="relative mt-[4px] mb-[6px] flex gap-[2px] h-[111px]">
                <div class="w-[10px] rounded-[3px] bg-[#0a0b0d] border border-[#24272b]"></div>
                <div class="w-[10px] rounded-[3px] bg-[#0a0b0d] border border-[#24272b]"></div>
                <div class="absolute left-[4px] top-[43px] w-[14px] h-[24px] rounded-[2px] border border-[#0a0b0d] bg-gradient-to-b from-[#3b4149] to-[#22262a] flex items-center"><div class="w-full h-[2px] bg-[#1bc25f]"></div></div>
              </div>
            </div>
            <div class="w-[31px] h-[285px] bg-[#14161a] border border-[#0d0e10] flex flex-col items-center">
              <svg class="mt-[5px] w-[12px] h-[10px]"><use href="#send"/></svg>
              <div class="mt-[40px] w-[24px] h-[20px] rounded-[2px] bg-black grid place-items-center font-['DejaVu_Sans_Mono'] font-bold text-[17px] leading-none">
                <span class="[grid-area:1/1] text-[#0b2e16]">88</span><span class="[grid-area:1/1] text-[#18d860] whitespace-pre"> 3</span>
              </div>
              <div class="flex-1 flex items-end text-[11px] text-[#c8d0da]"><span class="[writing-mode:vertical-rl] rotate-180 leading-[12px]">FX 3</span></div>
              <div class="mt-[4px] w-[12px] h-[6px] rounded-[1px] border border-[#20242a] bg-[#5e7187]"></div>
              <div class="mt-[4px] w-[11px] h-[5px] rounded-[1px] bg-[#8dffb0] shadow-[0_0_3px_#35e07a]"></div>
              <div class="relative mt-[4px] mb-[6px] flex gap-[2px] h-[111px]">
                <div class="w-[10px] rounded-[3px] bg-[#0a0b0d] border border-[#24272b]"></div>
                <div class="w-[10px] rounded-[3px] bg-[#0a0b0d] border border-[#24272b]"></div>
                <div class="absolute left-[4px] top-[43px] w-[14px] h-[24px] rounded-[2px] border border-[#0a0b0d] bg-gradient-to-b from-[#3b4149] to-[#22262a] flex items-center"><div class="w-full h-[2px] bg-[#1bc25f]"></div></div>
              </div>
            </div>
          </div>

          <!-- new channel -->
          <div class="ml-[115px] w-[31px] h-[285px] shrink-0 rounded-[3px] bg-[#50565e] border border-[#666c74] flex items-center justify-center">
            <svg class="-ml-px w-[16px] h-[16px]" viewBox="0 0 16 16"><path d="M6 0h4v6h6v4h-6v6H6v-6H0V6h6z" fill="#fff"/></svg>
          </div>

          <!-- effects chain -->
          <div class="ml-[12px] mt-[4px] w-[235px] h-[276px] border border-[#181b20] flex flex-col">
            <div class="h-[13px] shrink-0 bg-[#181b20] flex items-center pl-[4px] gap-[4px] text-[10px] tracking-[-0.2px] text-[#cfdcec]">
              <div class="w-[12px] h-[5px] rounded-[1px] bg-[#5e7187]"></div>
              EFFECTS CHAIN
            </div>
            <div class="flex-1"></div>
            <div class="mx-[2px] mb-px h-[15px] rounded-[2px] bg-[#50565e] border border-[#666c74] flex items-center justify-center text-[10px] leading-[15px] pt-[2px] text-[#cfdcec]">Add effect</div>
          </div>
        </div>
      </div>

      <!-- add effect dialog -->
      <div class="absolute left-[617px] top-[16px] w-[585px] h-[578px] bg-[#262b30] flex flex-col">
        <div class="h-[28px] shrink-0 bg-[#f0f0f0] flex items-center pl-[9px] text-[11.500px] text-[#4a4f55]">
          <svg class="w-[14px] h-[13px]" viewBox="0 0 14 13"><path d="M0 4h3l5-4v13L3 9H0z" fill="#fff"/><path d="M10 3q2 3.500 0 7M12 1q3 5.500 0 11" fill="none" stroke="#fff"/></svg>
          <span class="ml-[6px]">Add effect</span>
          <span class="ml-auto text-[13px] text-[#555]">?</span>
          <svg class="ml-[29px] mr-[13px] w-[12px] h-[12px]" viewBox="0 0 12 12"><path d="M1 1l10 10M11 1L1 11" stroke="#444"/></svg>
        </div>

        <div class="mt-[11px] mx-[11px] h-[16px] shrink-0 rounded-[3px] bg-[#111316] border border-[#18c253] pl-[3px] flex items-center"><div class="w-px h-[12px] bg-white"></div></div>

        <div class="mt-[11px] ml-[12px] flex">
          <div class="w-[549px] shrink-0">
            <div class="h-[19px] flex bg-gradient-to-b from-[#565c64] to-[#40454c] border-b border-[#1a1d20] font-bold text-[11px] text-[#b7c7dc]">
              <div class="flex-1 flex items-center justify-center relative pr-[12px] pt-[2px]">Name
                <div class="absolute right-[6px] top-[7px] w-0 h-0 border-x-[4px] border-x-transparent border-t-[4px] border-t-[#18c253]"></div>
              </div>
              <div class="w-[53px] border-l border-[#2b2f34] flex items-center justify-center pt-[2px]">Type</div>
            </div>
            <div class="h-[229px] overflow-hidden bg-[#0f1114] text-[11.250px] leading-[19px]">
              <div class="h-[19px] flex justify-between pl-[3px] bg-[#262b30]"><span>4 x 4 pole allpass</span><span class="w-[49px]">LADSPA</span></div>
              <div class="h-[19px] flex justify-between pl-[3px]"><span>AM pitchshifter</span><span class="w-[49px]">LADSPA</span></div>
              <div class="h-[19px] flex justify-between pl-[3px]"><span>Aliasing</span><span class="w-[49px]">LADSPA</span></div>
              <div class="h-[19px] flex justify-between pl-[3px]"><span>Allpass delay line, cubic spline interpolation</span><span class="w-[49px]">LADSPA</span></div>
              <div class="h-[19px] flex justify-between pl-[3px]"><span>Allpass delay line, linear interpolation</span><span class="w-[49px]">LADSPA</span></div>
              <div class="h-[19px] flex justify-between pl-[3px]"><span>Allpass delay line, noninterpolating</span><span class="w-[49px]">LADSPA</span></div>
              <div class="h-[19px] flex justify-between pl-[3px]"><span>Amplifier</span><span class="w-[49px]">LMMS</span></div>
              <div class="h-[19px] flex justify-between pl-[3px]"><span>Amplifier (Mono)</span><span class="w-[49px]">LADSPA</span></div>
              <div class="h-[19px] flex justify-between pl-[3px]"><span>Amplifier (Stereo)</span><span class="w-[49px]">LADSPA</span></div>
              <div class="h-[19px] flex justify-between pl-[3px]"><span>Artificial latency</span><span class="w-[49px]">LADSPA</span></div>
              <div class="h-[19px] flex justify-between pl-[3px]"><span>Audio Divider (Suboctave Generator)</span><span class="w-[49px]">LADSPA</span></div>
              <div class="h-[19px] flex justify-between pl-[3px]"><span>Auto phaser</span><span class="w-[49px]">LADSPA</span></div>
            </div>
          </div>
          <div class="ml-[3px] w-[9px] flex flex-col items-center pt-[4px]">
            <div class="w-0 h-0 border-x-[3px] border-x-transparent border-b-[3px] border-b-[#6c737c]"></div>
            <div class="mt-[5px] w-[9px] h-[23px] rounded-[4px] bg-[#3b4149]"></div>
            <div class="mt-[207px] w-0 h-0 border-x-[3px] border-x-transparent border-t-[3px] border-t-[#6c737c]"></div>
          </div>
        </div>

        <div class="flex flex-1 pl-[22px] pt-[22px]">
          <div class="w-[44px] h-[44px] rounded-[4px] bg-white flex items-center justify-center shrink-0">
            <svg class="w-[34px] h-[36px]" viewBox="0 0 34 36"><ellipse cx="17" cy="18" rx="16" ry="17.500" fill="#1a1c20"/><path d="M17 11c2-3 5-3 7-1 4 4 5 9 4 13-1 5-5 8-11 8S7 28 6 23c-1-4 0-9 4-13 2-2 5-2 7 1z" fill="#fff"/><circle cx="12" cy="10" r="1.500" fill="#1a1c20"/><circle cx="22" cy="10" r="1.500" fill="#1a1c20"/><path d="M14 11h6l-3 4z" fill="#1a1c20"/></svg>
          </div>
          <div class="ml-[16px] pt-[7px] text-[10.300px] leading-[13px] text-[#d3dae4]">
            <div>Name: 4 x 4 pole allpass</div>
            <div>File: phasers_1217.dll</div>
            <div>Maker: Steve Harris</div>
            <div class="pl-[37px]">&lt;steve@plugin.org.uk&gt;</div>
            <div>Copyright: GPL</div>
            <div>Requires Real Time: No</div>
            <div>Real Time Capable: Yes</div>
            <div>In Place Broken: No</div>
            <div>Channels In: 1</div>
            <div>Channels Out: 1</div>
          </div>
        </div>

        <div class="flex justify-end gap-[8px] pr-[12px] pb-[12px] text-[10.300px] text-[#d3dae4]">
          <div class="w-[78px] h-[15px] rounded-[2px] bg-[#50565e] border border-[#666c74] flex items-center justify-center">OK</div>
          <div class="w-[78px] h-[15px] rounded-[2px] bg-[#50565e] border border-[#666c74] flex items-center justify-center">Cancel</div>
        </div>
      </div>
    </div>
  </div>
</body>
</html>
